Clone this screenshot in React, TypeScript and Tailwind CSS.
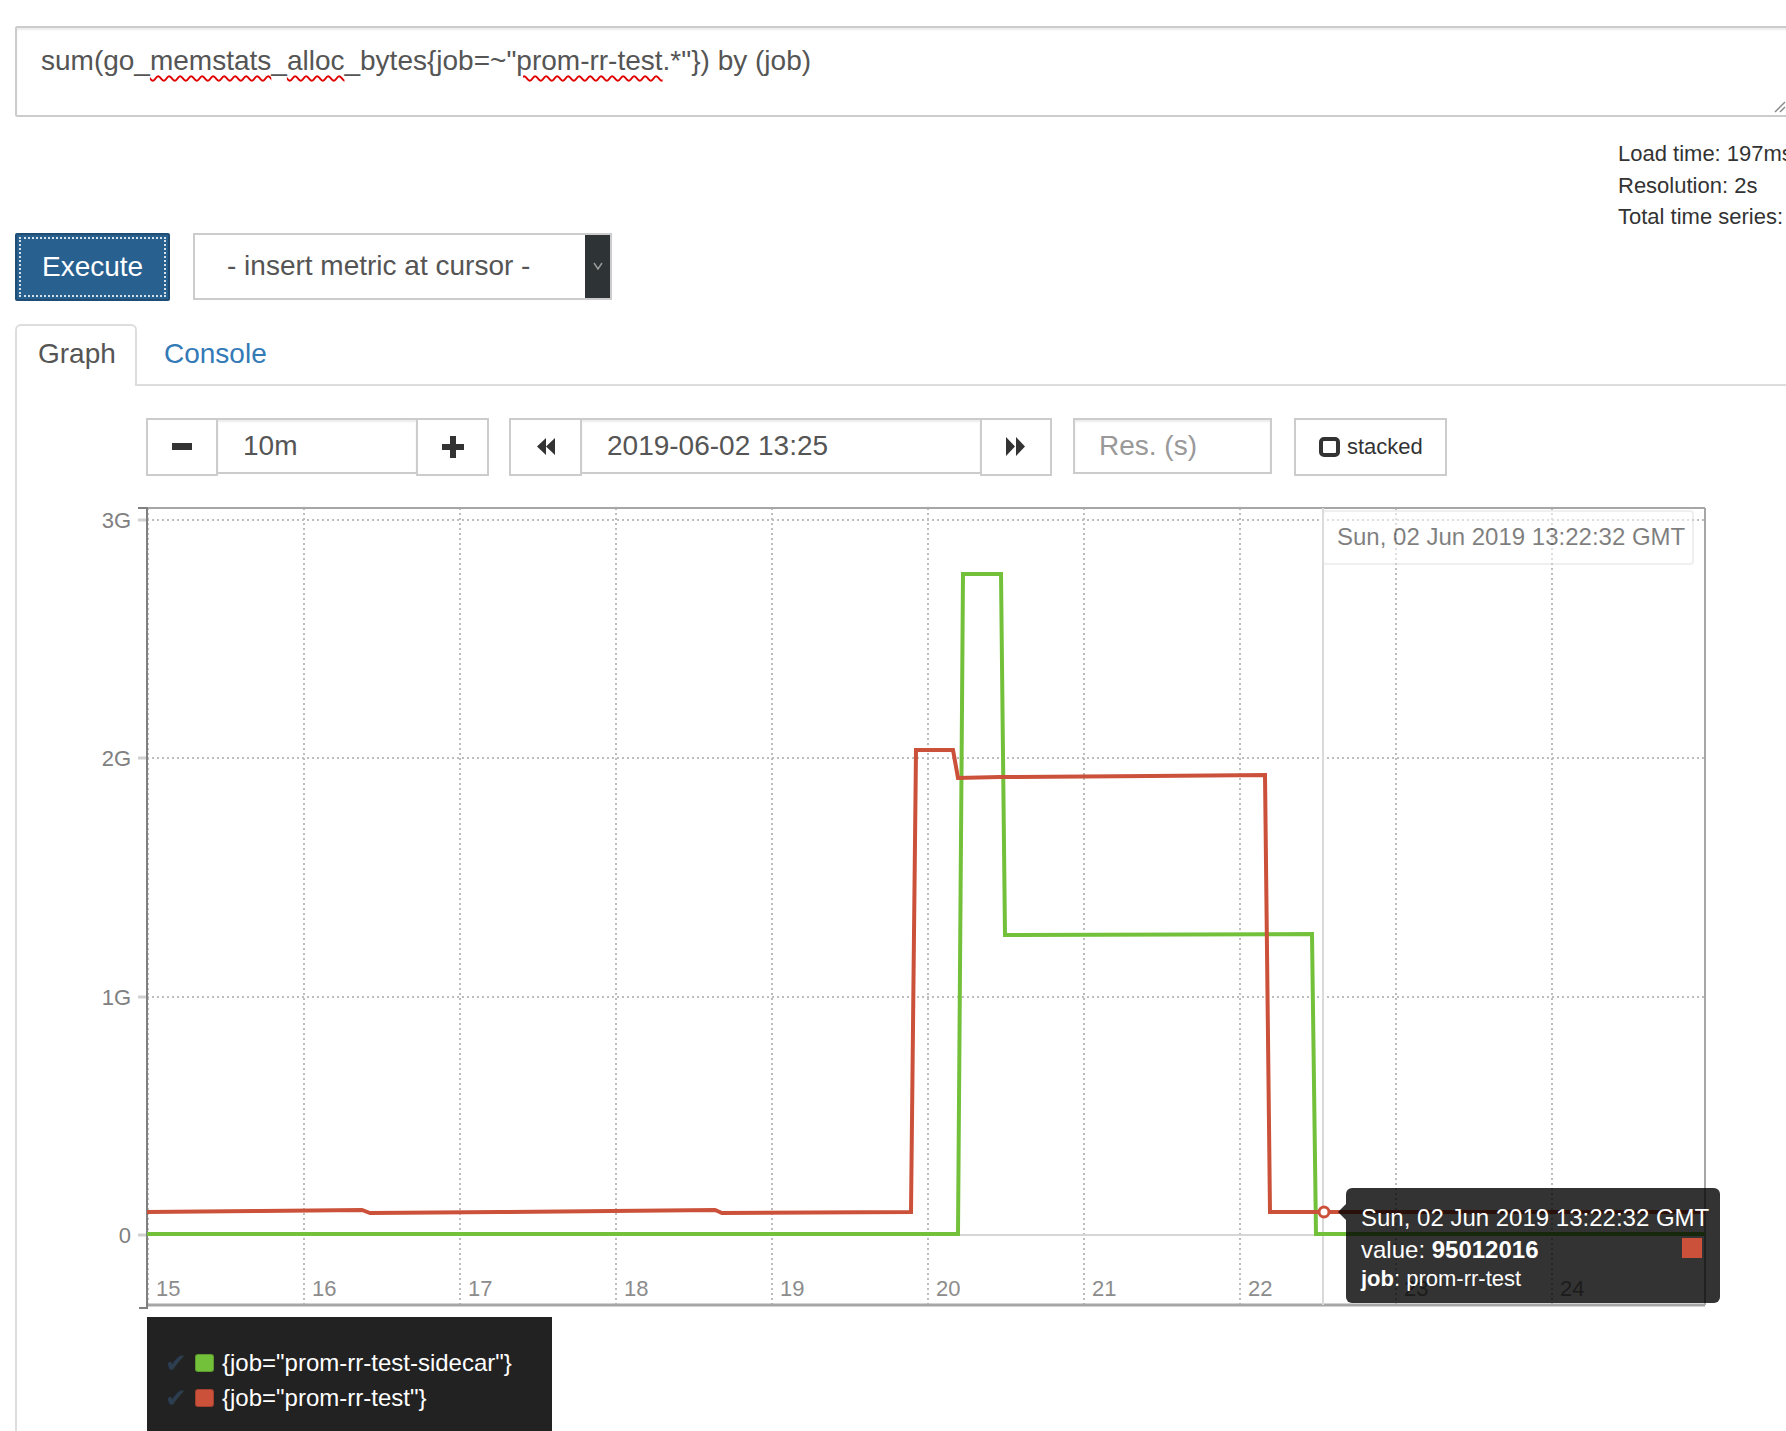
import React from "react";

const RED = "#cb513a";
const GREEN = "#73c03a";

const gridX = [148, 304, 460, 616, 772, 928, 1084, 1240, 1396, 1552];
const xLabels = ["15", "16", "17", "18", "19", "20", "21", "22", "23", "24"];
const yTicks = [
  { label: "3G", y: 519 },
  { label: "2G", y: 757 },
  { label: "1G", y: 996 },
  { label: "0", y: 1234 },
];

const redLine =
  "147,1211 260,1210 362,1209 370,1212 500,1211 715,1209 722,1212 911,1211 916,749 953,749 958,777 1000,776 1150,775 1265,774 1270,1211 1705,1211";
const greenLine = "147,1233 958,1233 963,573 1001,573 1005,934 1312,933 1316,1233 1705,1233";

function MinusIcon() {
  return (
    <svg width="20" height="8" viewBox="0 0 20 8">
      <rect x="0" y="0" width="20" height="7" fill="#333" />
    </svg>
  );
}

function PlusIcon() {
  return (
    <svg width="22" height="22" viewBox="0 0 22 22">
      <rect x="8" y="0" width="6" height="22" fill="#333" />
      <rect x="0" y="8" width="22" height="6" fill="#333" />
    </svg>
  );
}

function BackIcon() {
  return (
    <svg width="19" height="17" viewBox="0 0 19 17">
      <path d="M10 0 L1 8.5 L10 17 Z M19 0 L10 8.5 L19 17 Z" fill="#333" />
    </svg>
  );
}

function ForwardIcon() {
  return (
    <svg width="20" height="19" viewBox="0 0 20 19">
      <path d="M0 0 L9 9.5 L0 19 Z M10 0 L19 9.5 L10 19 Z" fill="#333" />
    </svg>
  );
}

function Spell({ children }: { children: React.ReactNode }) {
  return (
    <span className="underline decoration-wavy decoration-[#e00000] decoration-[2px] underline-offset-[5px]">
      {children}
    </span>
  );
}

function Chart() {
  return (
    <svg width="1769" height="826" viewBox="17 490 1769 826" className="block">
      {/* vertical grid */}
      {gridX.map((x) => (
        <line key={x} x1={x} y1={507} x2={x} y2={1304} stroke="#bdbdbd" strokeWidth="2" strokeDasharray="2 3" />
      ))}
      {/* horizontal grid */}
      {yTicks.slice(0, 3).map((t) => (
        <line key={t.label} x1={147} y1={t.y} x2={1705} y2={t.y} stroke="#bdbdbd" strokeWidth="2" strokeDasharray="2 3" />
      ))}
      <line x1={147} y1={1234} x2={1705} y2={1234} stroke="#d6d6d6" strokeWidth="2" />
      {/* frame */}
      <line x1={147} y1={507} x2={1705} y2={507} stroke="#a6a6a6" strokeWidth="2" />
      <line x1={1705} y1={507} x2={1705} y2={1304} stroke="#a6a6a6" strokeWidth="2" />
      <line x1={147} y1={1304} x2={1705} y2={1304} stroke="#a6a6a6" strokeWidth="3" />
      {/* y axis */}
      {yTicks.map((t) => (
        <line key={"t" + t.label} x1={138} y1={t.y} x2={147} y2={t.y} stroke="#d0d0d0" strokeWidth="3" />
      ))}
      <path d="M138,507 H147 V1307 H139" fill="none" stroke="#808080" strokeWidth="2" />
      {yTicks.map((t) => (
        <text
          key={"l" + t.label}
          x={131}
          y={t.y}
          textAnchor="end"
          dominantBaseline="central"
          fontSize="22"
          fill="#808080"
          fontFamily="'Liberation Sans', Arial, sans-serif"
        >
          {t.label}
        </text>
      ))}
      {/* x labels */}
      {gridX.map((x, i) => (
        <text
          key={"x" + x}
          x={x + 8}
          y={1287}
          dominantBaseline="central"
          fontSize="22"
          fill="#8c8c8c"
          fontFamily="'Liberation Sans', Arial, sans-serif"
        >
          {xLabels[i]}
        </text>
      ))}
      {/* hover line */}
      <line x1={1323} y1={507} x2={1323} y2={1304} stroke="#d9d9d9" strokeWidth="2" />
      {/* series */}
      <polyline points={greenLine} fill="none" stroke={GREEN} strokeWidth="4" />
      <polyline points={redLine} fill="none" stroke={RED} strokeWidth="4" />
      <circle cx={1324} cy={1211} r={5} fill="#fff" stroke={RED} strokeWidth="3" />
    </svg>
  );
}

export default function App() {
  return (
    <div className="relative h-[1431px] w-[1786px] overflow-hidden bg-white font-['Liberation_Sans',Arial,sans-serif] text-[#333]">
      {/* expression box */}
      <div className="relative ml-[15px] mt-[26px] h-[91px] w-[1775px] rounded-[2px] border-2 border-[#ccc] pl-[24px] pt-[13px] text-[28px] leading-[40px] text-[#555] shadow-[inset_0_2px_2px_rgba(0,0,0,0.075)] whitespace-nowrap">
        sum(go_<Spell>memstats</Spell>_<Spell>alloc</Spell>_bytes{"{"}job=~"<Spell>prom-rr-test</Spell>.*"{"}"}) by (job)
        <svg className="absolute bottom-[2px] right-[2px]" width="12" height="12" viewBox="0 0 12 12">
          <line x1="1" y1="11" x2="11" y2="1" stroke="#888" strokeWidth="1.5" />
          <line x1="6" y1="11" x2="11" y2="6" stroke="#888" strokeWidth="1.5" />
        </svg>
      </div>

      {/* eval stats */}
      <div className="ml-[1618px] mt-[21px] whitespace-nowrap text-[22px] leading-[31.5px] text-[#333]">
        <div>Load time: 197ms</div>
        <div>Resolution: 2s</div>
        <div>Total time series: 2</div>
      </div>

      {/* execute row */}
      <div className="ml-[15px] flex items-start gap-[23px]">
        <button className="flex h-[68px] w-[155px] items-center rounded-[2px] border-2 border-[#204d74] bg-[#286090] pl-[25px] text-[28px] text-white outline-2 outline-dotted outline-white/80 -outline-offset-[6px]">
          Execute
        </button>
        <div className="flex h-[67px] w-[419px] border-2 border-[#ccc] bg-white">
          <div className="flex flex-1 items-center pl-[32px] text-[28px] text-[#555]">- insert metric at cursor -</div>
          <div className="flex w-[25px] items-center justify-center bg-[#2e3436]">
            <svg width="10" height="8" viewBox="0 0 10 8">
              <path d="M1 1 L5 7 L9 1" fill="none" stroke="#9a9a9a" strokeWidth="1.5" />
            </svg>
          </div>
        </div>
      </div>

      {/* tabs */}
      <div className="ml-[15px] mt-[23px] flex h-[62px] items-stretch">
        <div className="h-[62px] w-[122px] rounded-t-[6px] border-2 border-b-0 border-[#ddd] bg-white pl-[21px] text-[28px] leading-[56px] text-[#555]">
          Graph
        </div>
        <div className="flex-1 border-b-2 border-[#ddd] pl-[27px] pt-[3px] text-[28px] leading-[54px] text-[#337ab7]">
          Console
        </div>
      </div>

      {/* tab content */}
      <div className="ml-[15px] h-[1046px] border-l-2 border-[#ddd]">
        {/* controls */}
        <div className="ml-[129px] flex items-start pt-[32px]">
          <div className="flex items-start">
            <div className="flex h-[58px] w-[72px] items-center justify-center border-2 border-[#ccc] bg-white">
              <MinusIcon />
            </div>
            <div className="flex h-[56px] w-[198px] items-center border-y-2 border-[#ccc] pl-[25px] text-[28px] text-[#555] shadow-[inset_0_2px_2px_rgba(0,0,0,0.075)]">
              10m
            </div>
            <div className="flex h-[58px] w-[73px] items-center justify-center border-2 border-[#ccc] bg-white">
              <PlusIcon />
            </div>
          </div>
          <div className="ml-[20px] flex items-start">
            <div className="flex h-[58px] w-[73px] items-center justify-center border-2 border-[#ccc] bg-white">
              <BackIcon />
            </div>
            <div className="flex h-[56px] w-[398px] items-center border-y-2 border-[#ccc] pl-[25px] text-[28px] text-[#555] shadow-[inset_0_2px_2px_rgba(0,0,0,0.075)]">
              2019-06-02 13:25
            </div>
            <div className="flex h-[58px] w-[72px] items-center justify-center border-2 border-[#ccc] bg-white">
              <ForwardIcon />
            </div>
          </div>
          <div className="ml-[21px] flex h-[56px] w-[199px] items-center border-2 border-[#ccc] pl-[24px] text-[28px] text-[#999] shadow-[inset_0_2px_2px_rgba(0,0,0,0.075)]">
            Res. (s)
          </div>
          <div className="ml-[22px] flex h-[58px] w-[153px] items-center border-2 border-[#ccc] bg-white pl-[23px] text-[22px] text-[#333]">
            <span className="mr-[7px] inline-block h-[20px] w-[21px] rounded-[5px] border-[4px] border-[#333]" />
            stacked
          </div>
        </div>

        {/* graph */}
        <div className="relative mt-[15px]">
          <Chart />
          <div className="absolute left-[1305px] top-[19px] flex h-[55px] w-[372px] items-center rounded-[4px] border-2 border-[#e0e0e0] bg-white pl-[13px] text-[24px] text-black opacity-50 whitespace-nowrap">
            Sun, 02 Jun 2019 13:22:32 GMT
          </div>
          <div className="absolute left-[1329px] top-[697px] h-[115px] w-[374px] rounded-[6px] bg-black/80 pl-[15px] pt-[14px] text-white whitespace-nowrap">
            <span className="absolute -left-[8px] top-[16px] h-0 w-0 border-y-[8px] border-r-[8px] border-y-transparent border-r-black/80" />
            <div className="text-[24px] leading-[32px]">Sun, 02 Jun 2019 13:22:32 GMT</div>
            <div className="text-[24px] leading-[32px]">
              value: <span className="font-bold">95012016</span>
            </div>
            <div className="text-[22px] leading-[26px]">
              <span className="font-bold">job</span>: prom-rr-test
            </div>
            <span className="absolute right-[18px] top-[50px] h-[20px] w-[20px]" style={{ backgroundColor: RED }} />
          </div>
        </div>

        {/* legend */}
        <div className="ml-[130px] h-[115px] w-[405px] bg-[#222] pt-[29px]">
          {[
            { c: GREEN, t: '{job="prom-rr-test-sidecar"}' },
            { c: RED, t: '{job="prom-rr-test"}' },
          ].map((s) => (
            <div key={s.t} className="flex h-[35px] items-center pl-[18px] whitespace-nowrap">
              <span className="w-[22px] font-['DejaVu_Sans',sans-serif] text-[26px] leading-[35px] text-[#2c3e50]">✔</span>
              <span
                className="ml-[8px] inline-block h-[18px] w-[19px] rounded-[3px] border border-black/20"
                style={{ backgroundColor: s.c }}
              />
              <span className="ml-[8px] text-[24px] text-white">{s.t}</span>
            </div>
          ))}
        </div>
      </div>
    </div>
  );
}
